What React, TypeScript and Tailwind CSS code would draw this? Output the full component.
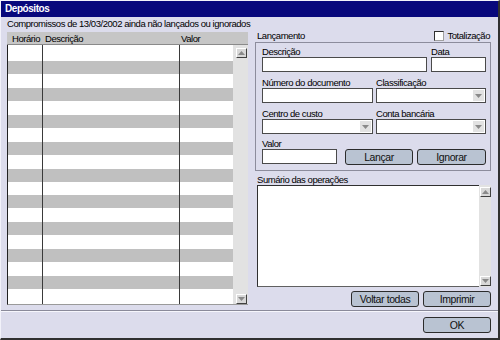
import React from 'react';

const font = { fontFamily: '"Liberation Sans", Arial, sans-serif' };

function Arrow({ down }: { down?: boolean }) {
  return (
    <svg width="7" height="4" viewBox="0 0 7 4">
      <polygon points={down ? '0,0 7,0 3.5,4' : '0,4 7,4 3.5,0'} fill="#8a8a8a" />
    </svg>
  );
}

function ScrollBtn({ down }: { down?: boolean }) {
  return (
    <div className="w-[11px] h-[10px] bg-[#d8d8d8] border-t border-l border-t-white border-l-white border-r border-b border-r-[#404040] border-b-[#404040] flex items-center justify-center">
      <Arrow down={down} />
    </div>
  );
}

function Input({ w }: { w: string }) {
  return <div className={`${w} h-[15px] bg-white border border-[#4a4a4a]`} />;
}

function Combo({ w }: { w: string }) {
  return (
    <div className={`${w} h-[15px] bg-white border border-[#4a4a4a] flex justify-end p-px`}>
      <div className="w-[11px] h-full bg-[#e2e2e2] flex items-center justify-center">
        <Arrow down />
      </div>
    </div>
  );
}

function Btn({ w, children }: { w: string; children: React.ReactNode }) {
  return (
    <div
      className={`${w} h-[16px] bg-[#b9c3d2] border border-[#2c2c2c] rounded-[3px] flex items-center justify-center text-[10.5px] tracking-[-0.4px] leading-none text-[#101010] whitespace-nowrap`}
    >
      {children}
    </div>
  );
}

function Label({ children }: { children: React.ReactNode }) {
  return (
    <div className="h-[12px] leading-[14px] text-[9.5px] tracking-[-0.45px] whitespace-nowrap">{children}</div>
  );
}

const rows: { h: string; gray: boolean }[] = [{ h: 'h-[16px]', gray: false }];
for (let i = 0; i < 8; i++) {
  rows.push({ h: 'h-[13px]', gray: true });
  rows.push({ h: 'h-[14px]', gray: false });
}
rows.push({ h: 'h-[13px]', gray: true });
rows.push({ h: 'h-[15px]', gray: false });

export default function App() {
  return (
    <div
      style={font}
      className="w-[500px] h-[340px] bg-[#dcdcec] border-t border-l border-t-[#f2f2fa] border-l-[#f2f2fa] border-r-2 border-b-2 border-r-[#303030] border-b-[#303030] flex flex-col text-black"
    >
      <div className="h-[16px] bg-[#08087c] text-white font-bold text-[10px] tracking-[-0.45px] leading-[16px] pl-[4px]">
        Depósitos
      </div>

      <div className="flex pl-[6px]">
        {/* left column */}
        <div className="w-[241px] pt-[1px] flex flex-col">
          <div className="h-[12px] leading-[12px] text-[9.5px] tracking-[-0.45px] whitespace-nowrap">
            Compromissos de 13/03/2002 ainda não lançados ou ignorados
          </div>
          <div className="mt-[2px] flex flex-col">
            <div className="h-[13px] bg-[#c6c6c6] border-b border-[#8a8a8a] flex text-[9.5px] tracking-[-0.45px] leading-[13px] whitespace-nowrap">
              <div className="w-[36px] pl-[5px]">Horário</div>
              <div className="w-[137px] pl-[2px]">Descrição</div>
              <div className="pl-[1px]">Valor</div>
            </div>
            <div className="h-[260px] flex border-l border-[#202020] border-b border-b-[#9a9a9a]">
              <div className="w-[225px] flex flex-col">
                {rows.map((r, i) => (
                  <div key={i} className={`${r.h} flex ${r.gray ? 'bg-[#c0c0c0]' : 'bg-white'}`}>
                    <div className="w-[35px] border-r border-[#3a3a3a]" />
                    <div className="w-[137px] border-r border-[#3a3a3a]" />
                    <div className="flex-1" />
                  </div>
                ))}
              </div>
              <div className="flex-1 bg-[#e2e2e2] flex flex-col items-end justify-between pt-[3px] pr-[1px]">
                <ScrollBtn />
                <ScrollBtn down />
              </div>
            </div>
          </div>
        </div>

        {/* right column */}
        <div className="w-[236px] ml-[7px] pt-[13px] flex flex-col">
          <div className="h-[12px] flex items-center justify-between pl-[2px]">
            <span className="text-[9.5px] tracking-[-0.45px] leading-[12px]">Lançamento</span>
            <span className="flex items-center gap-[3px] pr-[1px]">
              <span className="w-[10px] h-[10px] bg-white border-t border-l border-[#303030] border-r border-b border-r-[#a0a0a0] border-b-[#a0a0a0]" />
              <span className="text-[9.5px] tracking-[-0.45px] leading-[12px]">Totalização</span>
            </span>
          </div>

          <div className="h-[129px] border border-[#8c8c9c] pl-[6px] pr-[4px] pt-[2px] flex flex-col">
            <div className="flex gap-[4px]">
              <div>
                <Label>Descrição</Label>
                <Input w="w-[165px]" />
              </div>
              <div>
                <Label>Data</Label>
                <Input w="w-[55px]" />
              </div>
            </div>
            <div className="flex gap-[3px] mt-[4px]">
              <div>
                <Label>Número do documento</Label>
                <Input w="w-[111px]" />
              </div>
              <div>
                <Label>Classificação</Label>
                <Combo w="w-[110px]" />
              </div>
            </div>
            <div className="flex gap-[3px] mt-[4px]">
              <div>
                <Label>Centro de custo</Label>
                <Combo w="w-[111px]" />
              </div>
              <div>
                <Label>Conta bancária</Label>
                <Combo w="w-[110px]" />
              </div>
            </div>
            <div className="mt-[3px]">
              <Label>Valor</Label>
              <div className="flex items-start">
                <Input w="w-[75px]" />
                <div className="ml-[8px] flex gap-[4px]">
                  <Btn w="w-[68px]">Lançar</Btn>
                  <Btn w="w-[69px]">Ignorar</Btn>
                </div>
              </div>
            </div>
          </div>

          <div className="mt-[2px] pl-[2px]">
            <Label>Sumário das operações</Label>
          </div>
          <div className="ml-[2px] h-[102px] flex">
            <div className="flex-1 bg-white border-t border-l border-[#303030] border-b border-b-[#606060]" />
            <div className="w-[12px] bg-[#e2e2e2] flex flex-col justify-between items-end pt-[2px] pb-px">
              <ScrollBtn />
              <ScrollBtn down />
            </div>
          </div>
          <div className="mt-[4px] flex justify-end gap-[4px]">
            <Btn w="w-[68px]">Voltar todas</Btn>
            <Btn w="w-[68px]">Imprimir</Btn>
          </div>
        </div>
      </div>

      <div className="mt-[3px] border-t border-[#8a8a9a] border-b border-b-[#f6f6fc]" />
      <div className="flex justify-end pr-[7px] mt-[5px]">
        <Btn w="w-[68px]">OK</Btn>
      </div>
    </div>
  );
}
